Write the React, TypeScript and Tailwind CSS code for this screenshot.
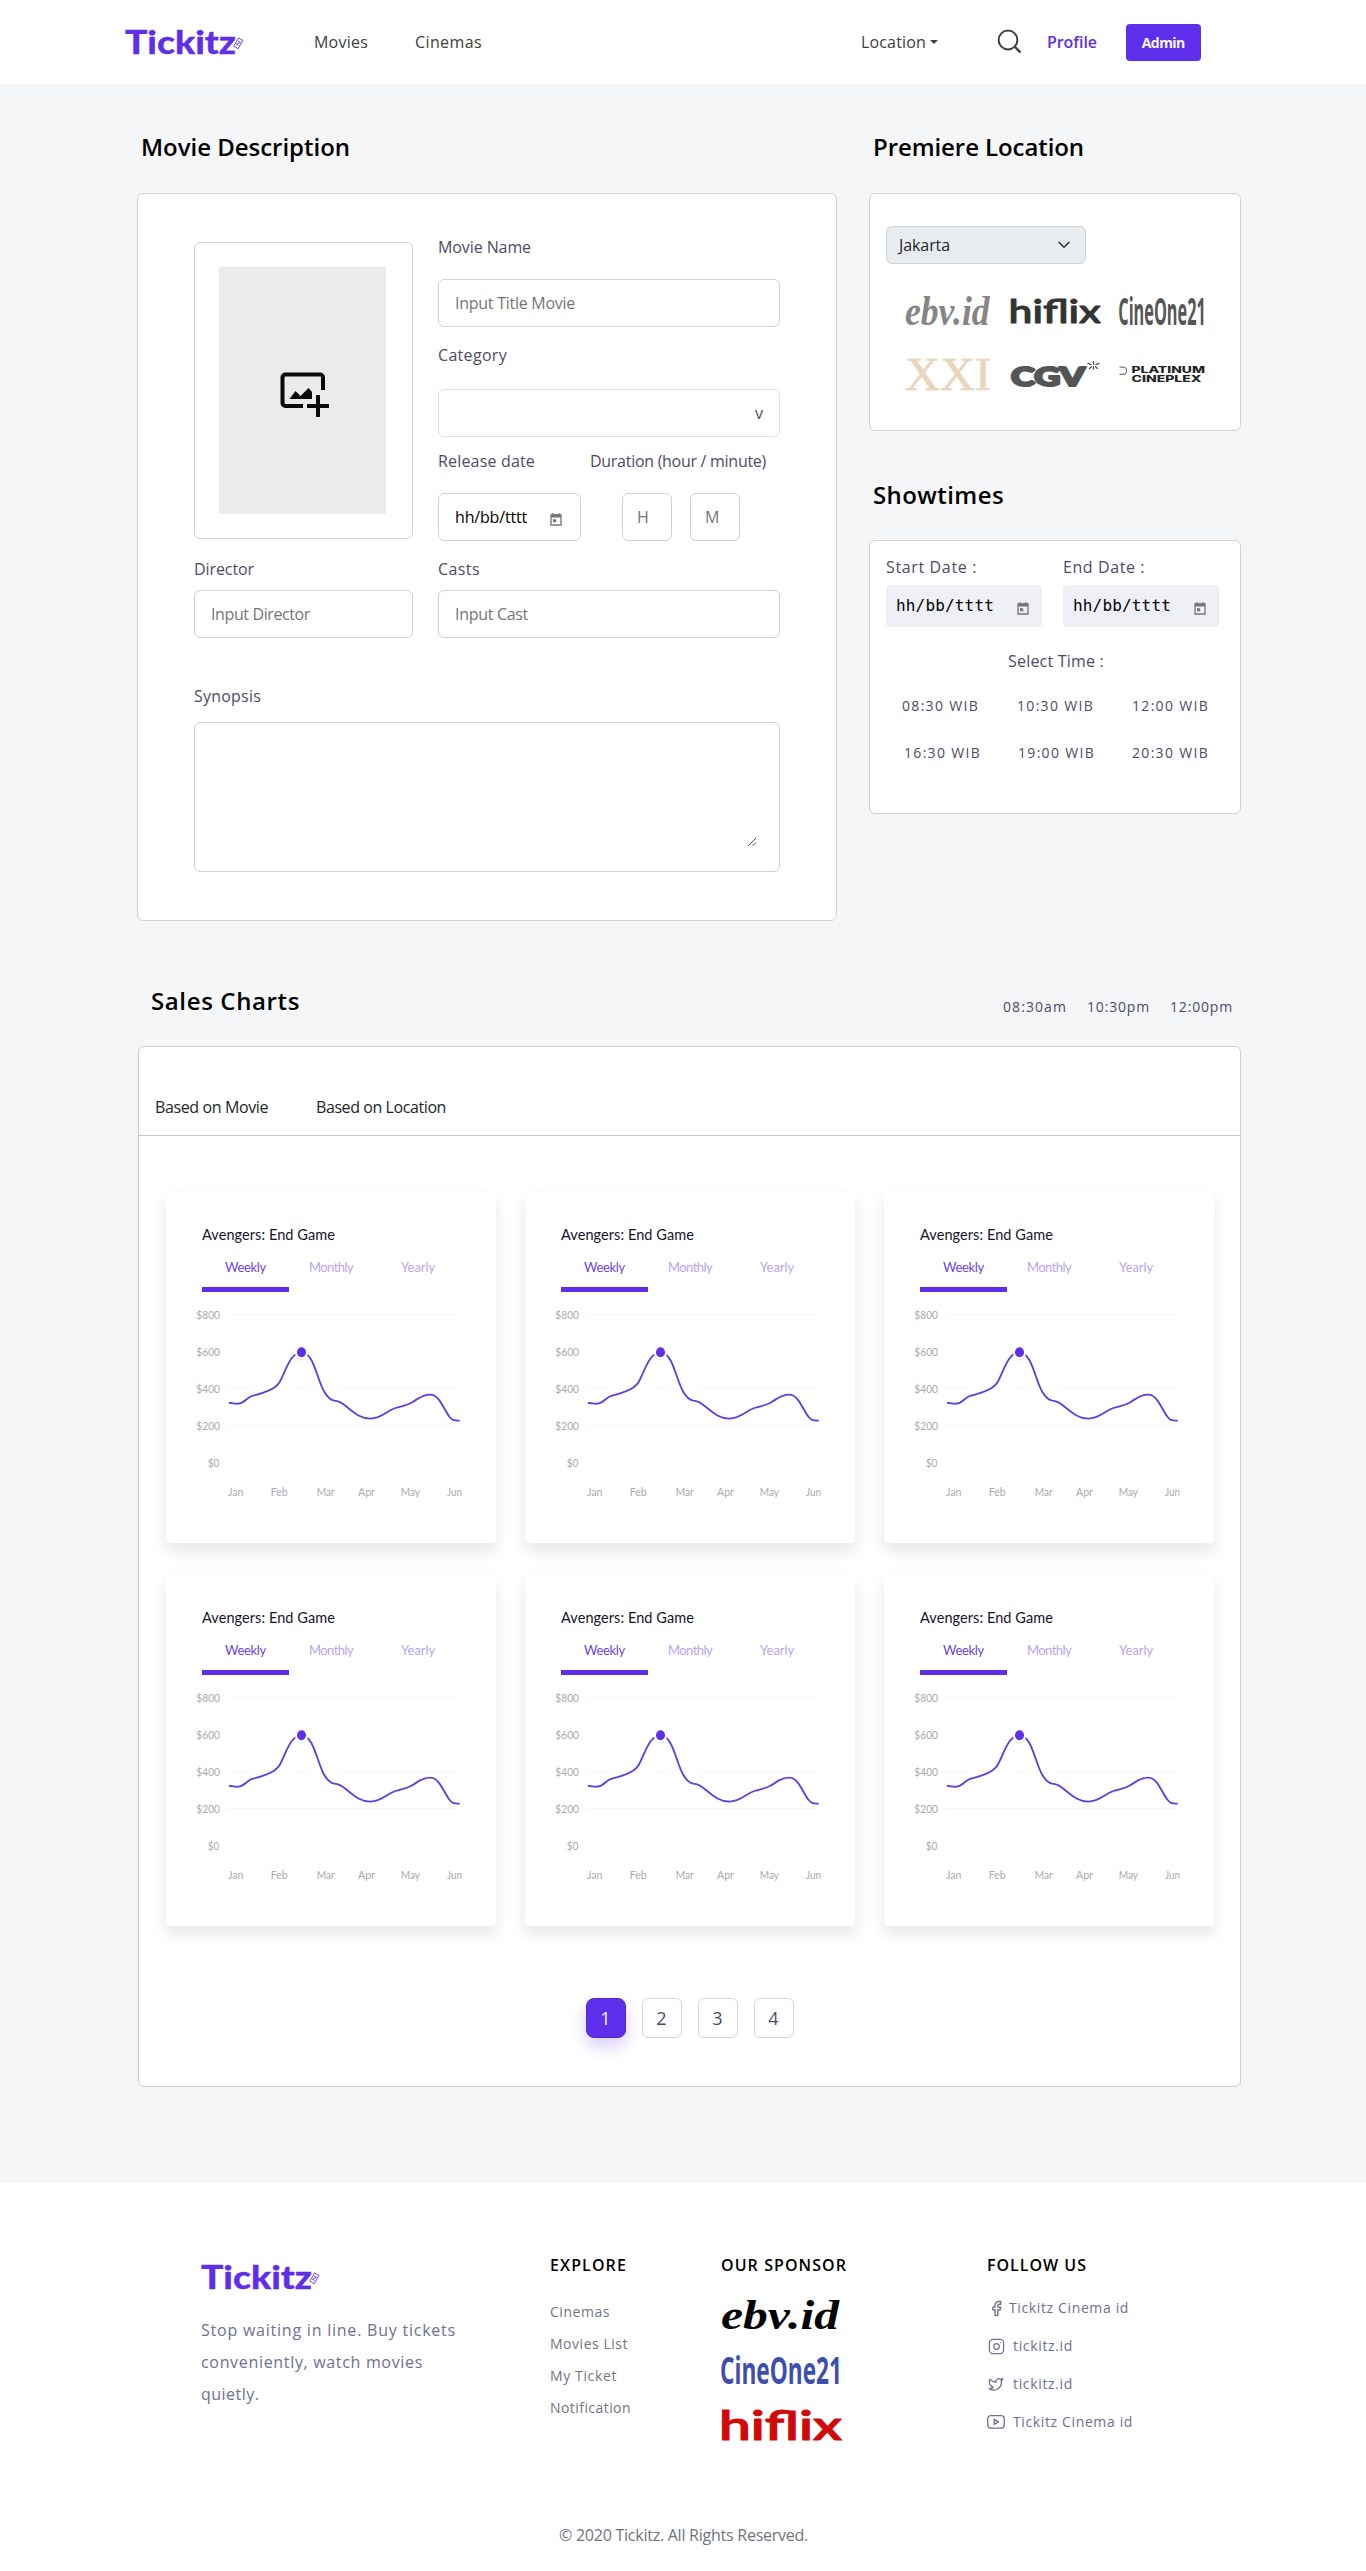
import { useLayoutEffect, useRef, type ReactNode } from "react";
import { Facebook, Instagram, Twitter } from "lucide-react";

/** One line of text whose tracking is adjusted so that it fills the given width. */
function Fit({ w, children, className = "" }: { w: number; children: string; className?: string }) {
  const ref = useRef<HTMLSpanElement>(null);
  useLayoutEffect(() => {
    const el = ref.current;
    if (!el) return;
    el.style.letterSpacing = "0px";
    el.style.width = "auto";
    const natural = el.getBoundingClientRect().width;
    el.style.letterSpacing = `${(w - natural) / children.length}px`;
    el.style.width = `${w}px`;
  }, [w, children]);
  return (
    <span ref={ref} className={`inline-block shrink-0 whitespace-nowrap ${className}`}>
      {children}
    </span>
  );
}

function Logo() {
  return (
    <svg width="119" height="28" viewBox="0 0 119 28" className="block shrink-0 overflow-visible" fill="#5f2eea">
      <text x="0" y="26" fontFamily="Lato" fontWeight="900" fontSize="33" textLength="111" lengthAdjust="spacingAndGlyphs" stroke="#5f2eea" strokeWidth="0.3">
        Tickitz
      </text>
      <g transform="rotate(30 113.5 15.5)" fill="#fff" stroke="#5f2eea" strokeWidth="0.8">
        <rect x="110.8" y="10.6" width="5" height="9.6" />
        <path d="M112 13.6h2.6l-2.6 3.6h2.6" fill="none" />
      </g>
    </svg>
  );
}

function CalendarIcon({ className = "" }: { className?: string }) {
  return (
    <svg width="12" height="13" viewBox="0 0 12 13" className={`block shrink-0 ${className}`}>
      <path d="M1 2h10v10H1z" fill="none" stroke="#757575" strokeWidth="1.3" />
      <path d="M1 1.6h10v3H1zM2.2 0.2h1.5v2H2.2zM8.3 0.2h1.5v2H8.3zM3 6.2h3.2v3H3z" fill="#757575" />
    </svg>
  );
}

type Mark = { w: number; h: number; color: string };

function EbvMark({ w, h, color }: Mark) {
  return (
    <svg width={w} height={h} viewBox="0 0 120 31" preserveAspectRatio="none" className="block overflow-visible">
      <text x="0" y="30" fontFamily="Liberation Serif" fontStyle="italic" fontWeight="700" fontSize="43" fill={color} textLength="118" lengthAdjust="spacingAndGlyphs">
        ebv.id
      </text>
    </svg>
  );
}

function HiflixMark({ w, h, color }: Mark) {
  return (
    <svg width={w} height={h} viewBox="0 0 120 31" preserveAspectRatio="none" className="block overflow-visible">
      <text x="-2" y="30" fontFamily="Lato" fontWeight="600" fontSize="40" fill={color} stroke={color} strokeWidth="1" strokeLinejoin="round" textLength="123" lengthAdjust="spacingAndGlyphs">
        hiflix
      </text>
    </svg>
  );
}

function CineOneMark({ w, h, color }: Mark) {
  return (
    <svg width={w} height={h} viewBox="0 0 120 31" preserveAspectRatio="none" className="block overflow-visible">
      <text x="-1" y="29" fontFamily="Open Sans" fontWeight="700" fontSize="38" fill={color} textLength="122" lengthAdjust="spacingAndGlyphs">
        CineOne21
      </text>
    </svg>
  );
}

function XxiMark() {
  return (
    <svg width="86" height="31" viewBox="0 0 86 31" className="block overflow-visible">
      <text x="0" y="30.5" fontFamily="Liberation Serif" fontSize="46" fill="#e8d5bb" stroke="#e8d5bb" strokeWidth="0.6" textLength="86" lengthAdjust="spacingAndGlyphs">
        XXI
      </text>
    </svg>
  );
}

function CgvMark() {
  return (
    <svg width="90" height="27" viewBox="0 0 90 27" className="block overflow-visible" fill="#555">
      <text x="1" y="25" fontFamily="Lato" fontWeight="900" fontSize="26" textLength="74" lengthAdjust="spacingAndGlyphs" stroke="#555" strokeWidth="2.2" strokeLinejoin="round">
        CGV
      </text>
      <g stroke="#555" strokeWidth="1.4" strokeLinecap="round">
        <path d="M83.500 0.800v2.400M83.500 5.800v2.200M78 2.400l3 1.200M89 2.400l-3 1.200M79.600 7.400l1.800-1.600M87.400 7.400l-1.800-1.600" />
      </g>
    </svg>
  );
}

function PlatinumMark() {
  return (
    <svg width="86" height="17" viewBox="0 0 86 17" className="block overflow-visible" fill="#222">
      <path d="M0.500 1.200h3.500a3.600 3.600 0 0 1 0 7.200H0.500" fill="none" stroke="#777" strokeWidth="1.200" />
      <text x="12.500" y="7" fontFamily="Inter" fontWeight="800" fontSize="8.600" textLength="73.500" lengthAdjust="spacingAndGlyphs">PLATINUM</text>
      <text x="12.500" y="16" fontFamily="Inter" fontWeight="800" fontSize="8.600" textLength="70" lengthAdjust="spacingAndGlyphs">CINEPLEX</text>
    </svg>
  );
}

function Field({ className = "", children }: { className?: string; children?: ReactNode }) {
  return (
    <div className={`flex h-12 items-center rounded-md border border-[#d2d2d2] px-4 leading-6 text-[#757575] ${className}`}>{children}</div>
  );
}

const CURVE =
  "M238 670C247 669 252 673 264 672C284 671 288 653 308 648C325 644 335 640 347 636C366 629 380 621 388 607C408 570 420 518 454 518C490 518 500 600 522 637C530 650 538 661 552 663C566 664 574 669 586 679C612 700 630 717 660 717C694 717 708 694 735 685C752 679 765 679 782 670C804 658 812 645 840 645C868 645 880 690 898 712C908 724 914 723 926 723";

const Y_TICKS: [string, number, number, number][] = [
  ["$800", 138, 417, 71],
  ["$600", 138, 528, 71],
  ["$400", 138, 639, 71],
  ["$200", 138, 750, 71],
  ["$0", 172, 861, 35],
];
const X_TICKS: [string, number, number][] = [
  ["Jan", 233, 46],
  ["Feb", 361, 51],
  ["Mar", 499, 54],
  ["Apr", 623, 51],
  ["May", 751, 58],
  ["Jun", 890, 45],
];

function ChartCard() {
  return (
    <div className="h-[351px] w-[330px] rounded bg-white pt-[33px] font-['Lato'] shadow-[0_8px_16px_rgba(0,0,0,0.1)]">
      <div className="ml-[36px] h-5 text-[14.5px] leading-5 text-[#14142b]">
        <Fit w={133}>Avengers: End Game</Fit>
      </div>
      <div className="ml-[59px] mt-3 flex h-5 text-[13px] leading-5 text-[#b9a6f0]">
        <Fit w={41} className="text-[#6b45e3]">Weekly</Fit>
        <Fit w={44} className="ml-[43px]">Monthly</Fit>
        <Fit w={34} className="ml-[48px]">Yearly</Fit>
      </div>
      <div className="ml-9 mt-[10px] h-[5px] w-[87px] bg-[#5f2eea]" />
      <svg width="330" height="200" viewBox="47 370 990 600" className="mt-[11px] block" fontFamily="Lato" fontSize="33" fill="#a9a9ad">
        <g stroke="#f6f6f8" strokeWidth="3">
          <path d="M230 405.500H926M230 627H305M435 627H480M567 627H926M230 738H926" />
        </g>
        {Y_TICKS.map(([label, x, y, w]) => (
          <text key={label} x={x} y={y} textLength={w} lengthAdjust="spacingAndGlyphs">{label}</text>
        ))}
        {X_TICKS.map(([label, x, w]) => (
          <text key={label} x={x} y={948} textLength={w} lengthAdjust="spacingAndGlyphs">{label}</text>
        ))}
        <path d={CURVE} fill="none" stroke="#5f3fe0" strokeWidth="5.500" strokeLinecap="round" />
        <ellipse cx="453.500" cy="524" rx="18" ry="19" fill="#ececf2" />
        <ellipse cx="453.500" cy="518" rx="19" ry="21" fill="#fff" />
        <ellipse cx="453.500" cy="518" rx="13.500" ry="15" fill="#5f2eea" />
      </svg>
    </div>
  );
}

function Header() {
  return (
    <header className="flex h-[84px] items-start bg-white leading-6 text-[#404040]">
      <div className="ml-[125px] mt-7"><Logo /></div>
      <Fit w={54} className="ml-[70px] mt-[30px]">Movies</Fit>
      <Fit w={67} className="ml-[47px] mt-[30px]">Cinemas</Fit>
      <Fit w={65} className="ml-[379px] mt-[30px]">Location</Fit>
      <svg width="8" height="4" viewBox="0 0 8 4" className="ml-[4px] mt-10"><path d="M0 0h8L4 4z" fill="#404040" /></svg>
      <svg width="26" height="26" viewBox="0 0 26 26" className="ml-[59px] mt-[29px]" fill="none" stroke="#404040" strokeWidth="2">
        <circle cx="11" cy="11" r="9.400" />
        <path d="M17.500 17.500L23.500 23.500" strokeWidth="2.400" />
      </svg>
      <Fit w={50} className="ml-[24px] mt-[30px] font-semibold text-[#5f2eea]">Profile</Fit>
      <div className="ml-[29px] mt-6 flex h-[37px] w-[74.500px] items-center justify-center rounded bg-[#5f2eea] text-sm font-bold text-[#f7f7fc]">
        <Fit w={43}>Admin</Fit>
      </div>
    </header>
  );
}

function MovieForm() {
  return (
    <div className="mt-[30px] h-[728px] rounded-md border border-[#d2d2d2] bg-white pl-14 pt-[41px] leading-6 text-[#4e4b66]">
      <div className="flex">
        <div className="w-[219px] pt-[7px]">
          <div className="h-[297px] rounded-md border border-[#d2d2d2] p-6">
            <div className="flex h-[247px] w-[167px] justify-center bg-[#ebebeb] pl-[4px] pt-[105px]">
              <svg width="50" height="46" viewBox="0 0 50 46" fill="#0b0b0b">
                <path d="M43 18V5.500a3 3 0 0 0-3-3H5.500a3 3 0 0 0-3 3V31a3 3 0 0 0 3 3H23" fill="none" stroke="#0b0b0b" strokeWidth="4" />
                <path d="M9.500 27l6-8 5 5 8-8 3.500 4v7zM27 32h22v4H27zM36 23h4v22h-4z" />
              </svg>
            </div>
          </div>
          <div className="mt-[18px] h-6"><Fit w={60}>Director</Fit></div>
          <Field className="mt-[9px]"><Fit w={99}>Input Director</Fit></Field>
        </div>
        <div className="ml-[25px] w-[342px]">
          <div className="h-6"><Fit w={93}>Movie Name</Fit></div>
          <Field className="mt-5"><Fit w={120}>Input Title Movie</Fit></Field>
          <div className="mt-4 h-6"><Fit w={69}>Category</Fit></div>
          <Field className="mt-[22px] justify-end border-[#dedede]"><span className="text-[#4e4b66]">v</span></Field>
          <div className="mt-3 flex h-6">
            <Fit w={97}>Release date</Fit>
            <Fit w={176} className="ml-[55px]">Duration (hour / minute)</Fit>
          </div>
          <div className="mt-5 flex">
            <Field className="w-[143px]">
              <Fit w={72} className="text-black">hh/bb/tttt</Fit>
              <CalendarIcon className="ml-[23px] mt-1" />
            </Field>
            <Field className="ml-[41px] w-[50px] px-[14px]">H</Field>
            <Field className="ml-[18px] w-[50px] px-[14px]">M</Field>
          </div>
          <div className="mt-4 h-6"><Fit w={42}>Casts</Fit></div>
          <Field className="mt-[9px]"><Fit w={73}>Input Cast</Fit></Field>
        </div>
      </div>
      <div className="mt-[46px] h-6"><Fit w={67}>Synopsis</Fit></div>
      <div className="mt-[14px] flex h-[150px] w-[586px] items-end justify-end rounded-md border border-[#d2d2d2] pb-6 pr-[22px]">
        <svg width="10" height="10" viewBox="0 0 10 10" stroke="#555" strokeWidth="1"><path d="M1 9L9 1M5.500 9L9 5.500" /></svg>
      </div>
    </div>
  );
}

function Premiere() {
  return (
    <div className="mt-[30px] h-[238px] rounded-md border border-[#d2d2d2] bg-white pl-4 pt-8">
      <div className="flex h-[38px] w-[200px] items-center justify-between rounded-md border border-[#ced4da] bg-[#e9ecef] px-3 font-['Open_Sans'] text-[#212529]">
        <Fit w={51}>Jakarta</Fit>
        <svg width="12" height="8" viewBox="0 0 12 8" className="mr-[3px]" fill="none" stroke="#343a40" strokeWidth="1.600" strokeLinecap="round" strokeLinejoin="round"><path d="M1 1.200l5 5 5-5" /></svg>
      </div>
      <div className="ml-[19px] mt-8 flex h-[31px] items-start">
        <EbvMark w={86} h={30} color="#858585" />
        <div className="ml-[19px] mt-0.5"><HiflixMark w={90} h={26} color="#333" /></div>
        <div className="ml-[19px]"><CineOneMark w={86} h={31} color="#555" /></div>
      </div>
      <div className="ml-[19px] mt-8 flex h-[31px]">
        <XxiMark />
        <div className="ml-[19px] mt-0.5"><CgvMark /></div>
        <div className="ml-[19px] mt-[7px]"><PlatinumMark /></div>
      </div>
    </div>
  );
}

function DateBox({ label, w }: { label: string; w: number }) {
  return (
    <div className="w-[156px]">
      <div className="h-6 leading-6"><Fit w={w}>{label}</Fit></div>
      <div className="mt-1.5 flex h-[42px] items-center rounded bg-[#eff0f6] pl-[10px] text-black">
        <Fit w={98} className="font-['DejaVu_Sans_Mono'] text-base">hh/bb/tttt</Fit>
        <CalendarIcon className="ml-[23px] mt-1" />
      </div>
    </div>
  );
}

function Showtimes() {
  return (
    <div className="mt-[29px] h-[274px] rounded-md border border-[#d2d2d2] bg-white pl-4 pt-[14px] text-[#4e4b66]">
      <div className="flex gap-[21px]">
        <DateBox label="Start Date :" w={91} />
        <DateBox label="End Date :" w={82} />
      </div>
      <div className="ml-[122px] mt-[22px] h-6 leading-6"><Fit w={96}>Select Time :</Fit></div>
      <div className="ml-4 mt-[23px] flex h-5 gap-[38px] text-sm leading-5">
        <Fit w={77}>08:30 WIB</Fit><Fit w={77}>10:30 WIB</Fit><Fit w={77}>12:00 WIB</Fit>
      </div>
      <div className="ml-[18px] mt-[27px] flex h-5 gap-[37px] text-sm leading-5">
        <Fit w={77}>16:30 WIB</Fit><Fit w={77}>19:00 WIB</Fit><Fit w={77}>20:30 WIB</Fit>
      </div>
    </div>
  );
}

function Sales() {
  return (
    <section>
      <div className="ml-[151px] mt-[64px] flex h-8 items-start">
        <Fit w={149} className="text-2xl font-semibold leading-8 text-black">Sales Charts</Fit>
        <div className="ml-[703px] mt-[12px] flex gap-5 text-sm leading-5 text-[#4e4b66]">
          <Fit w={64}>08:30am</Fit><Fit w={63}>10:30pm</Fit><Fit w={63}>12:00pm</Fit>
        </div>
      </div>
      <div className="ml-[138px] mt-[29px] h-[1041px] w-[1103px] rounded-md border border-[#cdcdcd] bg-white pt-12">
        <div className="flex h-[41px] border-b border-[#c6c6c6] pl-4 leading-6 text-[#212529]">
          <Fit w={113}>Based on Movie</Fit>
          <Fit w={130} className="ml-[48px]">Based on Location</Fit>
        </div>
        <div className="ml-[27px] mt-14 grid grid-cols-[330px_330px_330px] gap-x-[29px] gap-y-8">
          {[0, 1, 2, 3, 4, 5].map((i) => <ChartCard key={i} />)}
        </div>
        <div className="mt-[72px] flex justify-center gap-4 text-lg text-[#4e4b66]">
          <div className="flex size-10 items-center justify-center rounded-lg border border-[#5528d0] bg-[#5f2eea] text-[#f7f7fc] shadow-[0_8px_16px_rgba(95,46,234,0.24)]">1</div>
          {["2", "3", "4"].map((n) => (
            <div key={n} className="flex size-10 items-center justify-center rounded-md border border-[#d6d6d6]">{n}</div>
          ))}
        </div>
      </div>
    </section>
  );
}

function Social({ icon, label, w, gap }: { icon: ReactNode; label: string; w: number; gap: string }) {
  return (
    <div className="flex h-[38px] items-start text-sm leading-5">
      <div className={`flex h-5 items-center ${gap}`}>{icon}</div>
      <Fit w={w}>{label}</Fit>
    </div>
  );
}

function Footer() {
  return (
    <footer className="h-[388px] bg-white pt-[70px]">
      <div className="flex h-[270px] items-start">
        <div className="ml-[201px] w-[349px] pt-[10px]">
          <Logo />
          <div className="mt-[23px] flex flex-col items-start leading-8 text-[#6e7191]">
            <Fit w={255}>Stop waiting in line. Buy tickets</Fit>
            <Fit w={222}>conveniently, watch movies</Fit>
            <Fit w={58.5}>quietly.</Fit>
          </div>
        </div>
        <div className="w-[171px]">
          <div className="h-6 leading-6 text-black"><Fit w={77} className="font-semibold">EXPLORE</Fit></div>
          <div className="mt-[19px] flex flex-col items-start text-sm leading-8 text-[#6e7583]">
            <Fit w={60}>Cinemas</Fit>
            <Fit w={78}>Movies List</Fit>
            <Fit w={67}>My Ticket</Fit>
            <Fit w={81}>Notification</Fit>
          </div>
        </div>
        <div className="w-[266px]">
          <div className="h-6 leading-6 text-black"><Fit w={126} className="font-semibold">OUR SPONSOR</Fit></div>
          <div className="mt-[22px]"><EbvMark w={120} h={31} color="#050505" /></div>
          <div className="mt-[25px]"><CineOneMark w={120} h={31} color="#3d4fae" /></div>
          <div className="mt-[24px]"><HiflixMark w={120} h={31} color="#d00a0a" /></div>
        </div>
        <div>
          <div className="h-6 leading-6 text-black"><Fit w={100} className="font-semibold">FOLLOW US</Fit></div>
          <div className="mt-[21px] text-[#6e7191]">
            <Social gap="w-[22px] pl-[1px]" w={120} label="Tickitz Cinema id" icon={<Facebook size={17} strokeWidth={2} />} />
            <Social gap="w-[26px] pl-[1px]" w={60} label="tickitz.id" icon={<Instagram size={17} strokeWidth={1.8} />} />
            <Social gap="w-[26px] pl-[1px]" w={60} label="tickitz.id" icon={<Twitter size={16} strokeWidth={2} />} />
            <Social gap="w-[26px]" w={120} label="Tickitz Cinema id" icon={
              <svg width="18" height="14" viewBox="0 0 18 14" fill="none" stroke="currentColor" strokeWidth="1.300" strokeLinejoin="round">
                <rect x="0.700" y="0.700" width="16.600" height="12.400" rx="3" /><path d="M7.200 4.400l4.200 2.500-4.200 2.500z" />
              </svg>} />
          </div>
        </div>
      </div>
      <div className="ml-[559px] leading-6 text-[#6e7580]"><Fit w={249}>© 2020 Tickitz. All Rights Reserved.</Fit></div>
    </footer>
  );
}

export default function App() {
  return (
    <div className="h-[2571px] w-[1366px] overflow-hidden bg-[#f5f6f8] font-['Open_Sans',sans-serif] text-base">
      <Header />
      <main className="h-[2099px] pt-[47px]">
        <div className="ml-[137px] flex gap-8">
          <div className="w-[700px]">
            <div className="ml-1 h-8 text-2xl font-semibold leading-8 text-black"><Fit w={209}>Movie Description</Fit></div>
            <MovieForm />
          </div>
          <div className="w-[372px]">
            <div className="ml-1 h-8 text-2xl font-semibold leading-8 text-black"><Fit w={211}>Premiere Location</Fit></div>
            <Premiere />
            <div className="ml-1 mt-[48px] h-8 text-2xl font-semibold leading-8 text-black"><Fit w={131}>Showtimes</Fit></div>
            <Showtimes />
          </div>
        </div>
        <Sales />
      </main>
      <Footer />
    </div>
  );
}
